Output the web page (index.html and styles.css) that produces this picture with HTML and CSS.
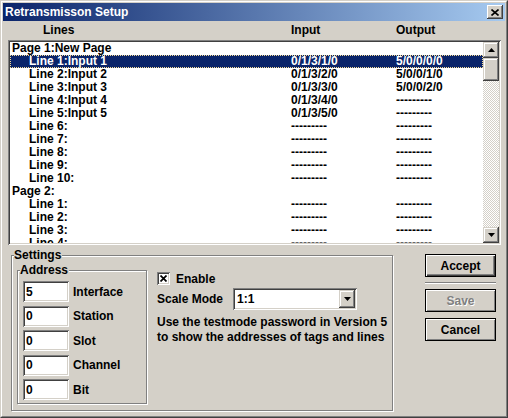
FILE: index.html
```html
<!doctype html>
<html lang="en">

<head>
    <meta charset="UTF-8" />
    <title>Retransmisson Setup</title>
    <link rel="stylesheet" href="styles.css">
</head>

<body>
    <div class="window">
        <div class="frame">
            <div class="titlebar">
                <span class="title">Retransmisson Setup</span>
                <button class="close-btn" type="button" title="Close">
                    <svg width="8" height="7" viewBox="0 0 8 7">
                        <path d="M0.5 0.5 L7.5 6.5 M7.5 0.5 L0.5 6.5" stroke="#000" stroke-width="1.6" fill="none" />
                    </svg>
                </button>
            </div>

            <div class="dialog">
                <div class="list-header">
                    <span class="col-lines">Lines</span>
                    <span>Input</span>
                    <span>Output</span>
                </div>

                <div class="listbox">
                    <div class="list-rows">
                        <div class="row page"><span>Page 1:New Page</span><span></span><span></span></div>
                        <div class="row line selected"><span>Line 1:Input 1</span><span>0/1/3/1/0</span><span>5/0/0/0/0</span></div>
                        <div class="row line"><span>Line 2:Input 2</span><span>0/1/3/2/0</span><span>5/0/0/1/0</span></div>
                        <div class="row line"><span>Line 3:Input 3</span><span>0/1/3/3/0</span><span>5/0/0/2/0</span></div>
                        <div class="row line"><span>Line 4:Input 4</span><span>0/1/3/4/0</span><span>---------</span></div>
                        <div class="row line"><span>Line 5:Input 5</span><span>0/1/3/5/0</span><span>---------</span></div>
                        <div class="row line"><span>Line 6:</span><span>---------</span><span>---------</span></div>
                        <div class="row line"><span>Line 7:</span><span>---------</span><span>---------</span></div>
                        <div class="row line"><span>Line 8:</span><span>---------</span><span>---------</span></div>
                        <div class="row line"><span>Line 9:</span><span>---------</span><span>---------</span></div>
                        <div class="row line"><span>Line 10:</span><span>---------</span><span>---------</span></div>
                        <div class="row page"><span>Page 2:</span><span></span><span></span></div>
                        <div class="row line"><span>Line 1:</span><span>---------</span><span>---------</span></div>
                        <div class="row line"><span>Line 2:</span><span>---------</span><span>---------</span></div>
                        <div class="row line"><span>Line 3:</span><span>---------</span><span>---------</span></div>
                        <div class="row line"><span>Line 4:</span><span>---------</span><span>---------</span></div>
                    </div>
                    <div class="scrollbar">
                        <div class="scroll-btn">
                            <svg width="7" height="4" viewBox="0 0 7 4"><path d="M3.5 0 L7 4 L0 4 Z" fill="#000" /></svg>
                        </div>
                        <div class="scroll-track">
                            <div class="scroll-thumb"></div>
                        </div>
                        <div class="scroll-btn">
                            <svg width="7" height="4" viewBox="0 0 7 4"><path d="M0 0 L7 0 L3.5 4 Z" fill="#000" /></svg>
                        </div>
                    </div>
                </div>

                <div class="lower">
                    <div class="group settings">
                        <span class="group-label">Settings</span>

                        <div class="group address">
                            <span class="group-label">Address</span>
                            <div class="field"><input type="text" value="5"><label>Interface</label></div>
                            <div class="field"><input type="text" value="0"><label>Station</label></div>
                            <div class="field"><input type="text" value="0"><label>Slot</label></div>
                            <div class="field"><input type="text" value="0"><label>Channel</label></div>
                            <div class="field"><input type="text" value="0"><label>Bit</label></div>
                        </div>

                        <div class="options">
                            <div class="check-row">
                                <span class="checkbox">
                                    <svg width="7" height="7" viewBox="0 0 7 7">
                                        <path d="M0.5 0.5 L6.5 6.5 M6.5 0.5 L0.5 6.5" stroke="#000" stroke-width="1.7" fill="none" />
                                    </svg>
                                </span>
                                <span>Enable</span>
                            </div>
                            <div class="scale-row">
                                <span class="scale-label">Scale Mode</span>
                                <div class="combo">
                                    <span class="combo-value">1:1</span>
                                    <span class="combo-btn">
                                        <svg width="7" height="4" viewBox="0 0 7 4"><path d="M0 0 L7 0 L3.5 4 Z" fill="#000" /></svg>
                                    </span>
                                </div>
                            </div>
                            <p class="note">Use the testmode password in Version 5<br>to show the addresses of tags and lines</p>
                        </div>
                    </div>

                    <div class="buttons">
                        <button class="btn default" type="button">Accept</button>
                        <div class="separator"></div>
                        <button class="btn" type="button" disabled>Save</button>
                        <button class="btn cancel" type="button">Cancel</button>
                    </div>
                </div>
            </div>
        </div>
    </div>
</body>

</html>
```

FILE: styles.css
```css
:root {
    --face: #d4d0c8;
    --shadow: #808080;
    --dark: #404040;
    --select: #0a246a;
}

* {
    margin: 0;
    padding: 0;
    box-sizing: border-box;
    font-family: "Liberation Sans", Arial, sans-serif;
    font-size: 12px;
    font-weight: bold;
}

body {
    width: 508px;
    height: 418px;
    background-color: var(--face);
    color: #000;
}

.window {
    width: 508px;
    height: 418px;
    border: 1px solid;
    border-color: var(--face) var(--dark) var(--dark) var(--face);
    background-color: var(--face);
}

.frame {
    height: 100%;
    border: 1px solid;
    border-color: #fff var(--shadow) var(--shadow) #fff;
    padding: 1px;
    display: flex;
    flex-direction: column;
}

/* title bar */
.titlebar {
    height: 18px;
    display: flex;
    align-items: center;
    justify-content: space-between;
    padding: 0 2px;
    background: linear-gradient(to right, #0a246a, #a6caf0);
}

.title {
    color: #fff;
    line-height: 18px;
}

.close-btn {
    width: 16px;
    height: 14px;
    border: none;
    background-color: var(--face);
    display: flex;
    align-items: center;
    justify-content: center;
    box-shadow: inset -1px -1px var(--dark), inset 1px 1px #fff,
        inset -2px -2px var(--shadow), inset 2px 2px var(--face);
}

/* list */
.dialog {
    flex: 1;
    padding: 0 4px 0 5px;
}

.list-header {
    height: 19px;
    line-height: 19px;
    display: grid;
    grid-template-columns: 283px 105px 1fr;
}

.col-lines {
    padding-left: 35px;
}

.listbox {
    width: 493px;
    height: 205px;
    padding: 2px;
    display: flex;
    background-color: #fff;
    box-shadow: inset 1px 1px var(--shadow), inset -1px -1px #fff,
        inset 2px 2px var(--dark), inset -2px -2px var(--face);
}

.list-rows {
    flex: 1;
    overflow: hidden;
}

.row {
    display: grid;
    grid-template-columns: 281px 105px 1fr;
    height: 13px;
    line-height: 13px;
    white-space: nowrap;
}

.row span:first-child {
    padding-left: 2px;
}

.row.line span:first-child {
    padding-left: 19px;
}

.row.selected {
    background-color: var(--select);
    color: #fff;
    outline: 1px dotted #f5db95;
    outline-offset: -1px;
}

.scrollbar {
    width: 16px;
    display: flex;
    flex-direction: column;
}

.scroll-btn {
    height: 16px;
    display: flex;
    align-items: center;
    justify-content: center;
    background-color: var(--face);
    box-shadow: inset -1px -1px var(--dark), inset 1px 1px var(--face),
        inset -2px -2px var(--shadow), inset 2px 2px #fff;
}

.scroll-track {
    flex: 1;
    background: repeating-conic-gradient(var(--face) 0 25%, #fff 0 50%) 0 0 / 2px 2px;
}

.scroll-thumb {
    height: 23px;
    background-color: var(--face);
    box-shadow: inset -1px -1px var(--dark), inset 1px 1px var(--face),
        inset -2px -2px var(--shadow), inset 2px 2px #fff;
}

/* settings area */
.lower {
    display: flex;
    align-items: flex-start;
}

.group {
    position: relative;
    border: 1px solid var(--shadow);
    box-shadow: 1px 1px 0 #fff, inset 1px 1px 0 #fff;
}

.group-label {
    position: absolute;
    top: -8px;
    left: 2px;
    padding: 0 1px 0 0;
    line-height: 14px;
    background-color: var(--face);
}

.settings {
    width: 382px;
    height: 156px;
    margin: 10px 0 0 3px;
    padding: 14px 0 0 5px;
    display: flex;
    align-items: flex-start;
}

.address {
    width: 130px;
    height: 134px;
    padding: 10px 0 0 5px;
    display: flex;
    flex-direction: column;
    gap: 3.5px;
}

.field {
    display: flex;
    align-items: center;
    height: 21px;
}

.field input {
    width: 46px;
    height: 21px;
    border: none;
    outline: none;
    padding: 0 3px;
    background-color: #fff;
    box-shadow: inset 1px 1px var(--shadow), inset -1px -1px #fff,
        inset 2px 2px var(--dark), inset -2px -2px var(--face);
}

.field label {
    margin-left: 4px;
}

.options {
    margin: 2px 0 0 10px;
}

.check-row {
    display: flex;
    align-items: center;
    gap: 6px;
    height: 13px;
}

.checkbox {
    width: 13px;
    height: 13px;
    display: flex;
    align-items: center;
    justify-content: center;
    background-color: #fff;
    box-shadow: inset 1px 1px var(--shadow), inset -1px -1px #fff,
        inset 2px 2px var(--dark), inset -2px -2px var(--face);
}

.scale-row {
    display: flex;
    align-items: center;
    margin-top: 3px;
    height: 22px;
}

.scale-label {
    width: 76px;
}

.combo {
    width: 124px;
    height: 22px;
    padding: 2px;
    display: flex;
    align-items: center;
    justify-content: space-between;
    background-color: #fff;
    box-shadow: inset 1px 1px var(--shadow), inset -1px -1px #fff,
        inset 2px 2px var(--dark), inset -2px -2px var(--face);
}

.combo-value {
    padding-left: 2px;
}

.combo-btn {
    width: 16px;
    height: 18px;
    display: flex;
    align-items: center;
    justify-content: center;
    background-color: var(--face);
    box-shadow: inset -1px -1px var(--dark), inset 1px 1px var(--face),
        inset -2px -2px var(--shadow), inset 2px 2px #fff;
}

.note {
    margin-top: 5px;
    line-height: 15px;
}

/* buttons */
.buttons {
    width: 71px;
    margin: 9px 0 0 32px;
    display: flex;
    flex-direction: column;
}

.btn {
    height: 23px;
    border: 1px solid #000;
    background-color: var(--face);
    box-shadow: inset 1px 1px #fff, inset -1px -1px var(--shadow);
    color: #000;
}

.btn.default {
    box-shadow: inset 1px 1px #fff, inset -1px -1px var(--dark),
        inset -2px -2px var(--shadow);
}

.btn:disabled {
    color: var(--shadow);
    text-shadow: 1px 1px #fff;
}

.btn.cancel {
    margin-top: 6px;
}

.separator {
    height: 2px;
    margin: 5px 0;
    border-top: 1px solid var(--shadow);
    border-bottom: 1px solid #fff;
}
```
